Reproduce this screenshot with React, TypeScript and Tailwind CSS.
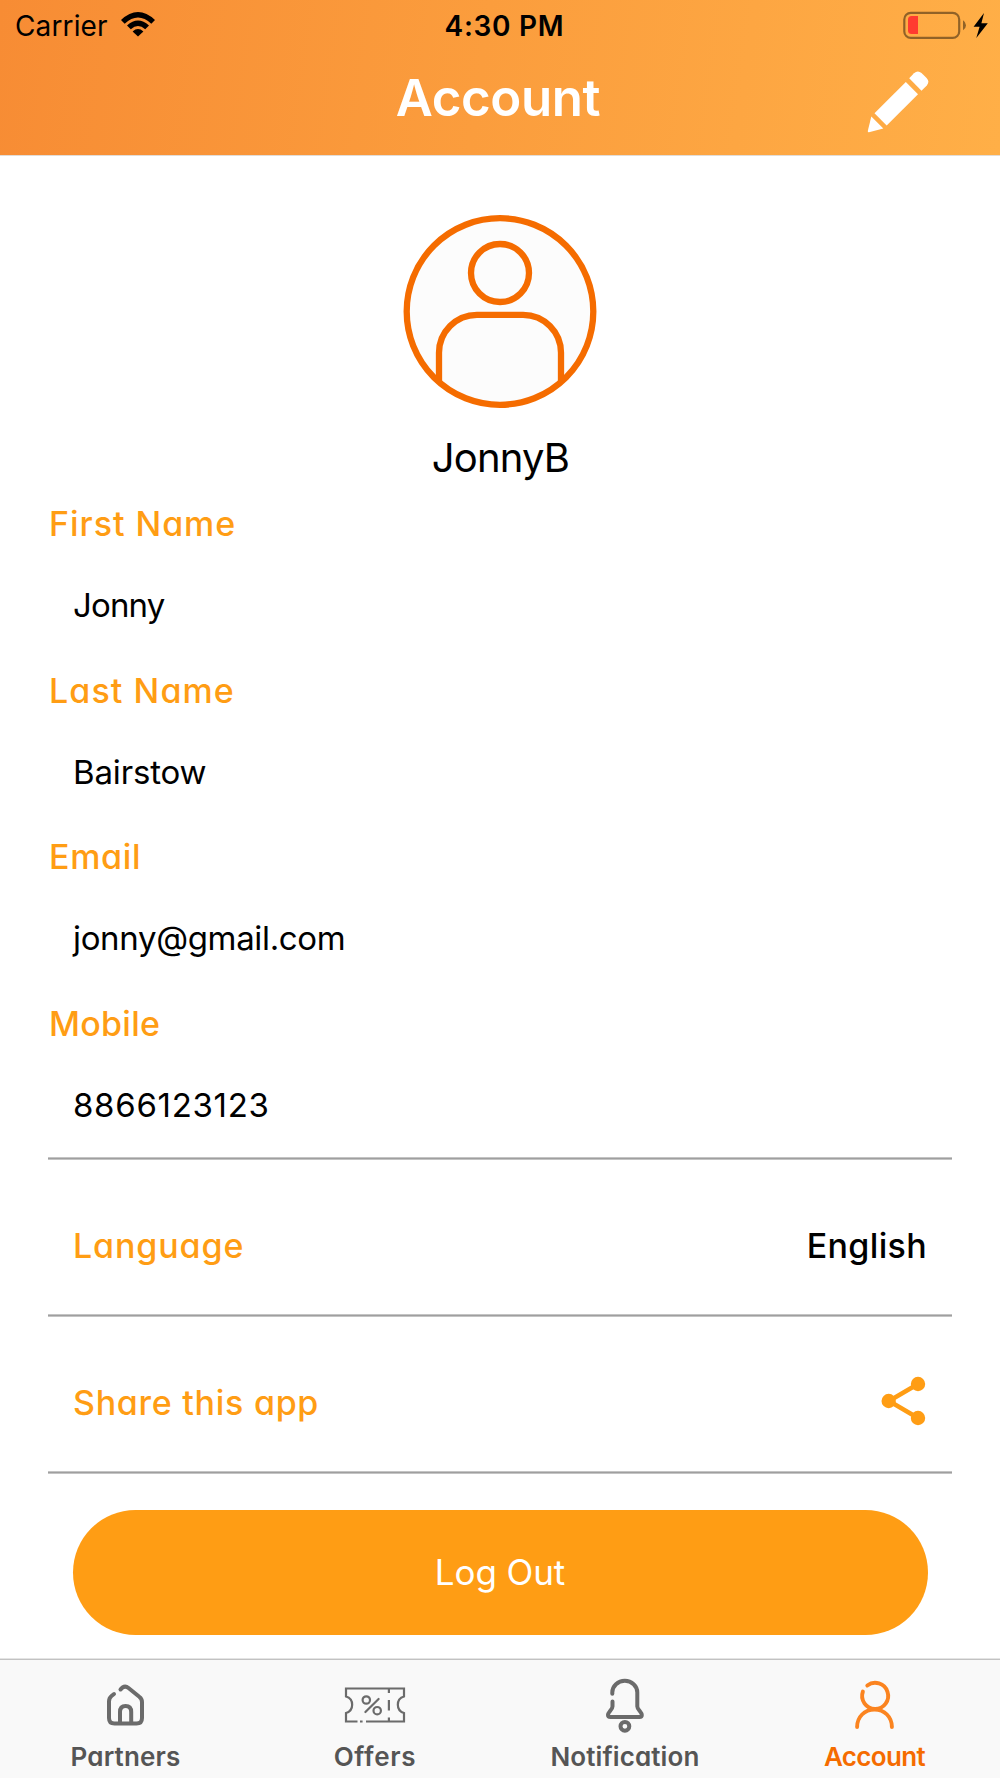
import type { ReactNode } from "react";

const fields = [
  { label: "First Name", value: "Jonny", labelCls: "tracking-[0.96px]", valueCls: "tracking-[-0.85px]" },
  { label: "Last Name", value: "Bairstow", labelCls: "tracking-[1.08px]", valueCls: "tracking-[-0.15px]" },
  { label: "Email", value: "jonny@gmail.com", labelCls: "tracking-[0.65px]", valueCls: "tracking-[-0.34px]" },
  { label: "Mobile", value: "8866123123", labelCls: "tracking-[0.26px]", valueCls: "tracking-[0.7px]" },
];

function StatusBar() {
  return (
    <div className="grid h-[51px] grid-cols-3 items-center text-[28px] leading-none text-black">
      <div className="flex items-center pl-[15px]">
        <span className="tracking-[0.13px]">Carrier</span>
        <svg className="mt-[-3px] ml-[13px] h-[25px] w-[34px]" viewBox="0 0 34 25">
          <path d="M0 8 Q17 -8 34 8 L30.3 11.8 Q17 -1 3.7 11.8 Z" />
          <path d="M6 13.4 Q17 3.6 28 13.4 L24.2 17.2 Q17 10.8 9.8 17.2 Z" />
          <path d="M11.6 19.4 Q17 14.6 22.4 19.4 L17 24.6 Z" />
        </svg>
      </div>
      <span className="pl-[9px] text-center font-semibold tracking-[0.72px]">4:30 PM</span>
      <div className="flex justify-end pr-[11px]">
        <svg className="mt-[-2px] h-[28px] w-[86px]" viewBox="903 10 86 28">
          <rect x="904.3" y="11.9" width="54.9" height="25" rx="6.5" fill="none" stroke="#000" strokeOpacity=".43" strokeWidth="2.2" />
          <path d="M963 19.2 Q966 21 966 24.2 Q966 27.4 963 29.2 Z" fill="#000" fillOpacity=".43" />
          <path d="M911.5 15 H918 V33 H911.5 Q908 33 908 29.5 V18.5 Q908 15 911.5 15 Z" fill="#ff3b30" />
          <path d="M984 12 L973.6 25.8 H979.6 L976.3 37 L987.8 22.3 H981.4 Z" fill="#000" />
        </svg>
      </div>
    </div>
  );
}

function Header() {
  return (
    <header className="h-[156px] border-b border-[#e2dcd6] bg-[linear-gradient(98deg,#f78c34_0%,#fb9d3d_48%,#ffaf47_100%)]">
      <StatusBar />
      <div className="grid h-[92px] grid-cols-[1fr_auto_1fr] items-center">
        <span />
        <h1 className="pr-[4px] text-[51px] leading-none font-semibold tracking-[-0.4px] text-white [font-feature-settings:'cv11']">Account</h1>
        <svg className="mt-[9px] mr-[71px] h-[62px] w-[62px] justify-self-end" viewBox="867 71 62 62" fill="#fff">
          <path d="M909.2 78.3 L914 73.3 Q917.7 69.8 921.5 73 L926.6 78 Q930 81.7 926.8 85.5 L921.5 90.7 Z" />
          <path d="M905.8 82 L918 94.3 L886.7 125.5 L874.5 113.3 Z" />
          <path d="M871.3 116.6 L883.3 128.6 L869 132.3 Q867.6 132.5 867.8 131 Z" />
        </svg>
      </div>
    </header>
  );
}

function Avatar() {
  return (
    <svg className="mx-auto h-[194px] w-[194px]" viewBox="0 0 194 194" fill="none" stroke="#f56c00" strokeWidth="6.3">
      <circle cx="97" cy="96.5" r="93.3" fill="#fcfcfc" />
      <circle cx="97" cy="58" r="29" />
      <path d="M36 166.5 V138 A38 38 0 0 1 74 99.8 H120 A38 38 0 0 1 158 138 V166.5" />
    </svg>
  );
}

function Divider() {
  return <div className="mx-[48px] h-[3px] border-y border-[#c4c4c4] bg-[#9f9f9f]" />;
}

function HomeIcon() {
  return (
    <svg className="h-[56px] w-[64px]" viewBox="94 1677 64 56" fill="none" stroke="#6b6b6b" strokeWidth="4" strokeLinecap="round" strokeLinejoin="round">
      <path d="M114 1694 L111.5 1696 Q109 1698 109 1701.5 V1718 Q109 1723.6 114.5 1723.6 H136.5 Q142 1723.6 142 1718 V1702 Q142 1698.7 139.3 1696.8 L128.5 1688 Q125.5 1685.5 122.5 1687.5 L120.5 1689.5" />
      <path d="M120 1722.5 V1712 Q120 1706 125.6 1706 Q131.2 1706 131.2 1712 V1722.5" />
    </svg>
  );
}

function TicketIcon() {
  return (
    <svg className="h-[56px] w-[64px]" viewBox="343 1677 64 56" fill="none" stroke="#6b6b6b" strokeWidth="2.2">
      <path d="M357.5 1721.5 H346 V1713 A8.6 8.6 0 0 0 346 1696.5 V1688.5 H404 V1696.5 A8.6 8.6 0 0 0 404 1713 V1721.5 H366" />
      <path d="M360 1721.5 H362.6 M388.9 1689 V1693 M388.9 1700 V1710.5 M388.9 1717.5 V1721" />
      <circle cx="366.3" cy="1700" r="3.7" />
      <circle cx="377.2" cy="1710.7" r="3.7" />
      <path d="M378.6 1699 L365.4 1712" strokeLinecap="round" />
    </svg>
  );
}

function BellIcon() {
  return (
    <svg className="h-[56px] w-[64px]" viewBox="593 1677 64 56" fill="none" stroke="#6b6b6b" strokeWidth="4" strokeLinecap="round" strokeLinejoin="round">
      <path d="M612.3 1693.8 V1692.5 A12.5 11.7 0 0 1 637.3 1692.5 V1706.5 C637.3 1709.5 641.8 1712 641.8 1715 Q641.8 1717 639.5 1717 H610.5 Q608 1717 608 1715 C608 1712 612.5 1709.5 612.5 1706.5 V1701.5" />
      <circle cx="624.9" cy="1726.3" r="4.4" />
    </svg>
  );
}

function PersonIcon() {
  return (
    <svg className="h-[56px] w-[64px]" viewBox="843 1677 64 56" fill="none" stroke="#fb8420" strokeWidth="3.9" strokeLinecap="round">
      <path d="M867.3 1685.5 A13 13 0 1 1 862.9 1691.5" />
      <path d="M857.1 1727 C857.1 1717 864.5 1709.5 874.5 1709.5 C884.5 1709.5 891.9 1717 891.9 1727" />
    </svg>
  );
}

function Tab({ icon, label, cls }: { icon: ReactNode; label: string; cls: string }) {
  return (
    <div className={`flex flex-col items-center pt-[18px] text-[26px] leading-[48px] font-semibold [font-feature-settings:'cv11'] ${cls}`}>
      {icon}
      <span className="whitespace-nowrap">{label}</span>
    </div>
  );
}

export default function App() {
  return (
    <div className="flex h-[1778px] w-[1000px] flex-col overflow-hidden bg-white font-['Inter',sans-serif] text-black">
      <Header />
      <main className="flex flex-1 flex-col pt-[59px]">
        <Avatar />
        <div className="mt-[23px] h-[52px] pl-[1px] text-center text-[40px] leading-[52px] tracking-[-0.83px]">JonnyB</div>
        <div className="mt-[10px] h-[663px]">
          {fields.map((f) => (
            <div key={f.label} className="h-[166.7px]">
              <div className={`pl-[49px] text-[34px] leading-[60px] font-medium text-[#ff9d14] [font-feature-settings:'cv11'] ${f.labelCls}`}>{f.label}</div>
              <div className={`pl-[73px] text-[33px] leading-[103px] ${f.valueCls}`}>{f.value}</div>
            </div>
          ))}
        </div>
        <Divider />
        <div className="flex h-[154px] items-center justify-between pt-[16px] pr-[73px] pl-[73px] text-[34px] font-medium [font-feature-settings:'cv11']">
          <span className="tracking-[0.88px] text-[#ff9d14]">Language</span>
          <span className="tracking-[0.34px]">English</span>
        </div>
        <Divider />
        <div className="flex h-[154px] items-center justify-between pt-[16px] pr-[73px] pl-[73px] text-[34px] font-medium text-[#ff9d14] [font-feature-settings:'cv11']">
          <span className="tracking-[0.72px]">Share this app</span>
          <svg className="mt-[-2px] h-[50px] w-[46px]" viewBox="881 1376 46 50" fill="currentColor" stroke="currentColor">
            <path d="M918 1384 L889 1401 L918 1418" fill="none" strokeWidth="4.5" />
            <g stroke="none">
              <circle cx="918" cy="1384" r="7.2" />
              <circle cx="888.7" cy="1401" r="7.2" />
              <circle cx="918" cy="1418" r="7.2" />
            </g>
          </svg>
        </div>
        <Divider />
        <button className="mx-auto mt-[36px] h-[125px] w-[855px] rounded-full bg-[#ff9d14] text-[35px] tracking-[-0.08px] text-white">Log Out</button>
      </main>
      <nav className="grid h-[120px] grid-cols-4 border-t border-[#e4e4e4] bg-[#f9f9f9] text-[#555] shadow-[inset_0_1px_0_#c2c2c2]">
        <Tab icon={<HomeIcon />} label="Partners" cls="pl-[1px] tracking-[0.15px]" />
        <Tab icon={<TicketIcon />} label="Offers" cls="tracking-[0.7px]" />
        <Tab icon={<BellIcon />} label="Notification" cls="tracking-[0.1px]" />
        <Tab icon={<PersonIcon />} label="Account" cls="pr-[1px] tracking-[-0.65px] text-[#f56c00]" />
      </nav>
    </div>
  );
}
